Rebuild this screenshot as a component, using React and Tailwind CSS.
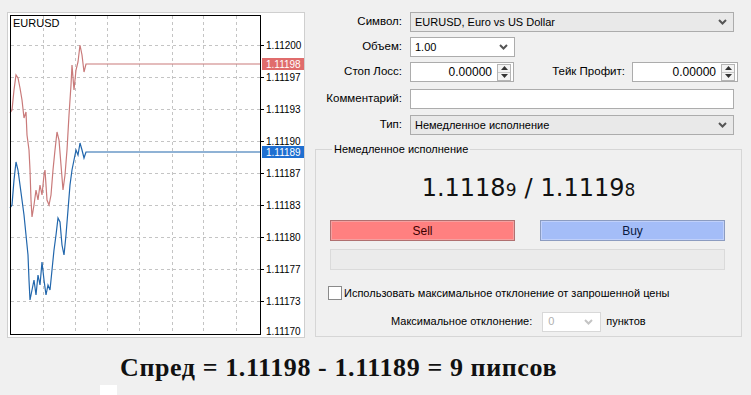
import React from "react";

const ui = "font-['Liberation_Sans',Arial,sans-serif] text-[11px] text-black";

const redPts = [
  [10, 113], [12, 110], [14, 90], [16, 75], [18, 78], [20, 88], [22, 100], [24, 118], [26, 112],
  [27, 135], [29, 150], [30, 170], [31, 200], [32, 217], [34, 205], [36, 190], [38, 200], [40, 185],
  [42, 195], [44, 175], [45, 170], [47, 200], [49, 205], [51, 195], [53, 170], [55, 150], [57, 132],
  [59, 140], [61, 165], [63, 190], [65, 175], [67, 150], [69, 115], [71, 85], [72, 65], [74, 90],
  [76, 70], [78, 62], [80, 45], [82, 55], [84, 72], [86, 64], [260, 64],
];

const bluePts = [
  [10, 208], [12, 205], [14, 180], [16, 162], [18, 170], [20, 185], [22, 200], [24, 215], [26, 235],
  [28, 255], [29, 280], [30, 300], [32, 290], [34, 280], [36, 295], [38, 275], [40, 285], [42, 262],
  [44, 280], [46, 295], [48, 285], [50, 290], [52, 270], [54, 250], [56, 235], [58, 218], [60, 222],
  [62, 245], [64, 255], [66, 235], [68, 210], [70, 185], [72, 170], [74, 160], [76, 150], [78, 155],
  [80, 143], [82, 150], [84, 158], [86, 152], [260, 152],
];

const levels = [
  ["1.11200", 45], ["1.11197", 77], ["1.11193", 109], ["1.11190", 141], ["1.11187", 173],
  ["1.11183", 205], ["1.11180", 237], ["1.11177", 269], ["1.11173", 301], ["1.11170", 331],
];

const vLines = [43, 75, 107, 139, 172, 203, 236];

// page coords -> svg coords (panel sits at 8,13 inside its border)
const pts = (arr) => arr.map(([x, y]) => `${x - 8},${y - 13}`).join(" ");

function Chart() {
  return (
    <div className="ml-[7px] mt-[12px] w-[298px] h-[326px] border border-[#cfcfcf] bg-white">
      <svg width="296" height="324" className="block">
        {levels.slice(0, 9).map(([, y]) => (
          <g key={y}>
            <line x1="3" x2="252" y1={y - 12.5} y2={y - 12.5} stroke="#c4c4c4" strokeDasharray="3,3" />
            <line x1="252" x2="256" y1={y - 12.5} y2={y - 12.5} stroke="#000" />
          </g>
        ))}
        {vLines.map((x) => (
          <line key={x} x1={x - 7.5} x2={x - 7.5} y1="3" y2="321" stroke="#c4c4c4" strokeDasharray="3,3" />
        ))}
        <polyline points={pts(redPts)} fill="none" stroke="#c97a7a" strokeWidth="1.2" />
        <polyline points={pts(bluePts)} fill="none" stroke="#2166ac" strokeWidth="1.2" />
        <rect x="2.5" y="2.5" width="250" height="319" fill="none" stroke="#000" />
        <text x="5" y="14" fontSize="11" fontFamily="Liberation Sans, Arial, sans-serif" fill="#000">EURUSD</text>
        {levels.map(([t, y]) => (
          <text key={t} x="258" y={y - 9} fontSize="10" fontFamily="Liberation Sans, Arial, sans-serif" fill="#000">{t}</text>
        ))}
        <rect x="254" y="45" width="42" height="12" fill="#e06c6c" />
        <text x="258" y="55" fontSize="10" fontFamily="Liberation Sans, Arial, sans-serif" fill="#fff">1.11198</text>
        <rect x="254" y="133" width="42" height="12" fill="#1f6fd1" />
        <text x="258" y="143" fontSize="10" fontFamily="Liberation Sans, Arial, sans-serif" fill="#fff">1.11189</text>
      </svg>
    </div>
  );
}

function Chevron({ light }) {
  return (
    <svg width="9" height="6" viewBox="0 0 9 6">
      <path d="M1 1 L4.5 4.5 L8 1" fill="none" stroke={light ? "#c4c4c4" : "#555"} strokeWidth="2" />
    </svg>
  );
}

function Select({ value, w, white }) {
  return (
    <div
      className={`${w} h-[20px] border border-[#acacac] ${white ? "bg-white" : "bg-[#e9e9e9]"} flex items-center justify-between pl-[4px] pr-[6px]`}
    >
      <span>{value}</span>
      <Chevron />
    </div>
  );
}

function Spin() {
  return (
    <div className="w-[14px] h-[17px] border border-[#b5b5b5] bg-[#f3f3f3] flex flex-col">
      <div className="flex-1 flex items-center justify-center border-b border-[#c8c8c8]">
        <svg width="7" height="4" viewBox="0 0 7 4"><path d="M0 4 L3.5 0 L7 4Z" fill="#333" /></svg>
      </div>
      <div className="flex-1 flex items-center justify-center">
        <svg width="7" height="4" viewBox="0 0 7 4"><path d="M0 0 L3.5 4 L7 0Z" fill="#333" /></svg>
      </div>
    </div>
  );
}

function NumInput({ w }) {
  return (
    <div className={`${w} h-[20px] border border-[#acacac] bg-white flex items-center justify-end pr-[2px] gap-[5px] text-[12px]`}>
      <span>0.00000</span>
      <Spin />
    </div>
  );
}

function Label({ children }) {
  return <div className="w-[93px] text-right pr-[1px] text-[11.5px]">{children}</div>;
}

function Form() {
  return (
    <div className="ml-[5px] pt-[12px] flex flex-col">
      <div className="flex items-center gap-[7px] h-[20px]">
        <Label>Символ:</Label>
        <Select value="EURUSD, Euro vs US Dollar" w="w-[324px]" />
      </div>
      <div className="flex items-center gap-[7px] h-[20px] mt-[5px]">
        <Label>Объем:</Label>
        <Select value="1.00" w="w-[105px]" white />
      </div>
      <div className="flex items-center gap-[7px] h-[20px] mt-[5px]">
        <Label>Стоп Лосс:</Label>
        <NumInput w="w-[104px]" />
        <div className="w-[104px] text-right text-[11.5px]">Тейк Профит:</div>
        <NumInput w="w-[106px]" />
      </div>
      <div className="flex items-center gap-[7px] h-[20px] mt-[7px]">
        <Label>Комментарий:</Label>
        <div className="w-[324px] h-[20px] border border-[#acacac] bg-white" />
      </div>
      <div className="flex items-center gap-[7px] h-[20px] mt-[6px]">
        <Label>Тип:</Label>
        <Select value="Немедленное исполнение" w="w-[324px]" />
      </div>

      <fieldset className="mt-[8px] ml-[5px] w-[427px] h-[194px] border border-[#d6d6d6] pl-[14px] pr-[16px] pb-0">
        <legend className="ml-[2px] px-[2px] leading-[13px]">Немедленное исполнение</legend>
        <div className="flex items-baseline justify-center mt-[14px] h-[30px] font-['DejaVu_Sans',sans-serif] text-[#111] pl-[2px]">
          <span className="text-[24px]">1.1118</span>
          <span className="text-[17px]">9</span>
          <span className="text-[24px] mx-[8px]">/</span>
          <span className="text-[24px]">1.1119</span>
          <span className="text-[17px]">8</span>
        </div>
        <div className="flex justify-between mt-[20px]">
          <div className="w-[185px] h-[21px] border border-[#b07070] bg-[#ff8080] shadow-[inset_0_0_0_1px_#f4a0a0] flex items-center justify-center text-[#3a0000] text-[12px]">
            Sell
          </div>
          <div className="w-[185px] h-[21px] border border-[#8c9cc0] bg-[#a4bdf8] shadow-[inset_0_0_0_1px_#c0d0fa] flex items-center justify-center text-[#0a1a40] text-[12px]">
            Buy
          </div>
        </div>
        <div className="mt-[8px] h-[21px] border border-[#dadada] bg-[#ebebeb]" />
        <div className="flex items-center mt-[15px] -ml-[2px]">
          <div className="w-[14px] h-[14px] border border-[#8a8a8a] bg-white" />
          <span className="ml-[2px] text-[11px]">Использовать максимальное отклонение от запрошенной цены</span>
        </div>
        <div className="flex items-center mt-[10px] ml-[61px] gap-[10px] text-[11px]">
          <span>Максимальное отклонение:</span>
          <div className="w-[59px] h-[20px] border border-[#d8d8d8] bg-white flex items-center justify-between pl-[5px] pr-[7px] text-[#b0b0b0]">
            <span>0</span>
            <Chevron light />
          </div>
          <span className="-ml-[5px]">пунктов</span>
        </div>
      </fieldset>
    </div>
  );
}

export default function App() {
  return (
    <div className={`${ui} w-[751px] h-[395px] bg-[#f0f0f0] overflow-hidden flex flex-col`}>
      <div className="flex h-[340px]">
        <Chart />
        <Form />
      </div>
      <div className="flex-1 flex flex-col">
        <div className="pl-[120px] pt-[13px] font-['Liberation_Serif',serif] font-bold text-[26px] tracking-[0.6px] leading-[30px] text-[#111]">
          Спред = 1.11198 - 1.11189 = 9 пипсов
        </div>
        <div className="ml-[100px] mt-auto w-[17px] h-[10px] bg-white" />
      </div>
    </div>
  );
}
